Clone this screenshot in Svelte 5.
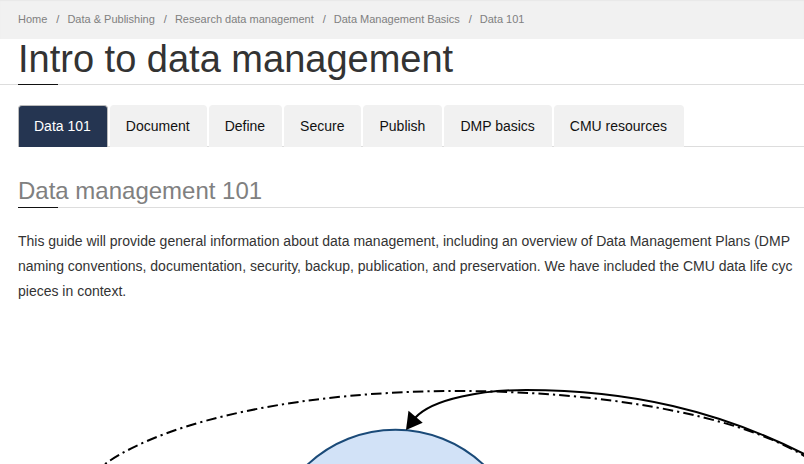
<script>
  const crumbs = ['Home', 'Data & Publishing', 'Research data management', 'Data Management Basics', 'Data 101'];
  const tabs = ['Data 101', 'Document', 'Define', 'Secure', 'Publish', 'DMP basics', 'CMU resources'];
  let active = $state(0);
</script>

<nav class="crumbs" aria-label="Breadcrumb">
  <ol>
    {#each crumbs as crumb}
      <li><a href="#top">{crumb}</a></li>
    {/each}
  </ol>
</nav>

<main>
  <h1>Intro to data management</h1>

  <div class="tabs" role="tablist">
    {#each tabs as tab, i}
      <button type="button" role="tab" class:active={i === active} aria-selected={i === active} onclick={() => (active = i)}>{tab}</button>
    {/each}
  </div>

  <section>
    <h2>Data management 101</h2>
    <p>
      This guide will provide general information about data management, including an overview of Data Management Plans (DMP<br />
      naming conventions, documentation, security, backup, publication, and preservation. We have included the CMU data life cyc<br />
      pieces in context.
    </p>
  </section>

  <svg class="cycle" width="804" height="84" viewBox="0 380 804 84" role="img" aria-label="Data life cycle">
    <circle cx="395.5" cy="558" r="128.3" fill="#d2e2f7" stroke="#1a4a78" stroke-width="2" />
    <g fill="none" stroke="#000" stroke-width="2">
      <path d="M105 464C170 418 310 391 457 391C595 391 735 413 806 457" stroke-dasharray="10.5 4.1 2.2 4.1" stroke-dashoffset="14.6" />
      <path d="M415 418C433 398 485 390 526 390C630 390 720 411 806 455" />
    </g>
    <path d="M406 430L408.500 410.700L422.700 422.700Z" fill="#000" />
  </svg>
</main>

<style>
  :global(body) {
    margin: 0;
    background: #fff;
    overflow-x: hidden;
  }

  .crumbs,
  main {
    font-family: "Liberation Sans", Arial, sans-serif;
  }

  .crumbs {
    background: #f1f1f1;
    box-shadow: inset 0 1px 1px #e8e8e8;
    padding: 0 18px;
  }

  ol {
    display: flex;
    margin: 0;
    padding: 0;
    list-style: none;
    font-size: 11px;
    line-height: 39px;
    white-space: nowrap;
    color: #777;
  }

  li + li::before {
    content: "/";
    margin: 0 8px 0 9px;
  }

  a {
    color: #808080;
    text-decoration: none;
  }

  main {
    overflow: hidden;
  }

  h1,
  h2 {
    position: relative;
    margin: 0;
    font-weight: 400;
    border-bottom: 1px solid #ddd;
  }

  h1 {
    padding: 0 18px 5px;
    font-size: 38px;
    line-height: 40px;
    color: #333;
  }

  h2 {
    font-size: 24px;
    line-height: 32px;
    color: #808080;
  }

  h1::after,
  h2::after {
    content: "";
    position: absolute;
    left: 0;
    bottom: -1px;
    width: 40px;
    height: 1px;
    background: #111;
  }

  h1::after {
    left: 18px;
  }

  .tabs {
    display: flex;
    gap: 2px;
    margin: 20px 0 0 18px;
    box-shadow: inset 0 -1px #ddd;
  }

  button {
    height: 42px;
    padding: 0 16px 2px 15px;
    border: 1px solid #f1f1f1;
    border-bottom: 0;
    border-radius: 4px 4px 0 0;
    background: #f1f1f1;
    font-family: inherit;
    font-size: 14px;
    white-space: nowrap;
    color: #111;
    cursor: pointer;
  }

  button.active {
    border-color: #bbb;
    background: #253551;
    color: #fff;
  }

  section {
    padding: 28px 0 0 18px;
  }

  p {
    margin: 21px 0 0;
    font-size: 14px;
    line-height: 25px;
    white-space: nowrap;
    color: #333;
  }

  .cycle {
    display: block;
    margin-top: 76px;
  }
</style>
